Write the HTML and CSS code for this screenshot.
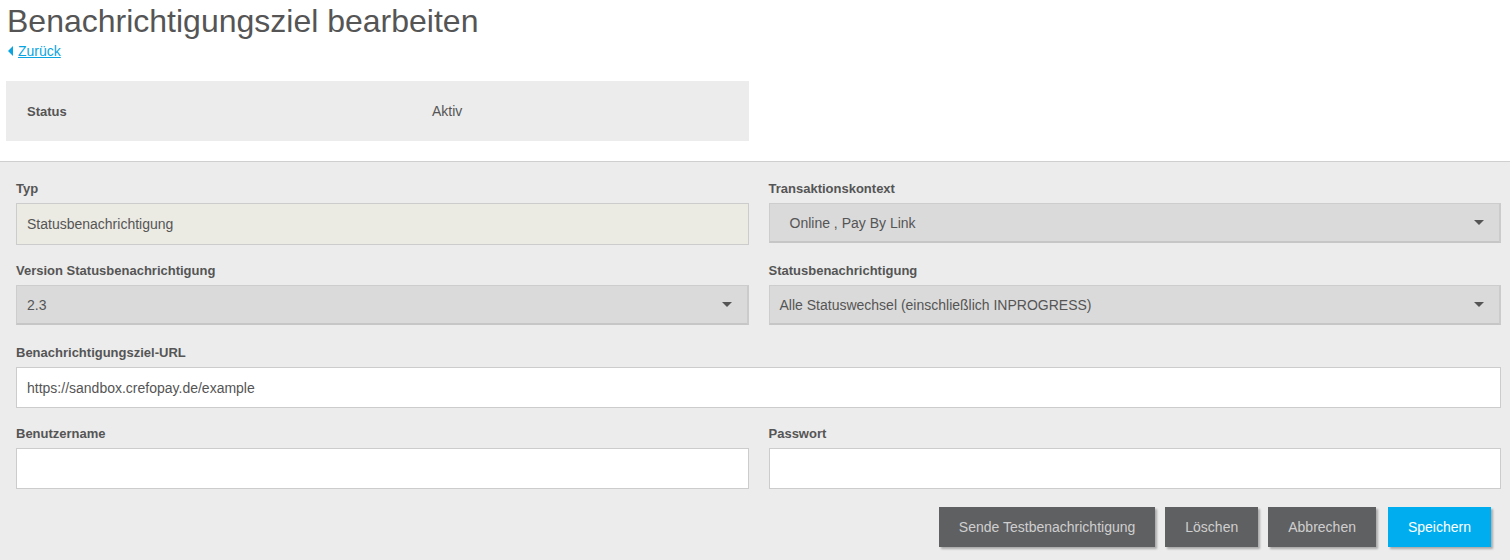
FILE: index.html
```html
<!DOCTYPE html>
<html lang="de">
<head>
<meta charset="utf-8">
<title>Benachrichtigungsziel bearbeiten</title>
<link rel="stylesheet" href="styles.css">
</head>
<body>
<header class="page-head">
  <h1 class="title">Benachrichtigungsziel bearbeiten</h1>
  <a class="back" href="#"><span class="caret"></span><span class="back-text">Zurück</span></a>
</header>
<section class="status-box">
  <div class="status-label">Status</div>
  <div class="status-value">Aktiv</div>
</section>
<form class="form">
  <div class="grid">
    <div class="group">
      <label class="label">Typ</label>
      <div class="field field-readonly">Statusbenachrichtigung</div>
    </div>
    <div class="group">
      <label class="label">Transaktionskontext</label>
      <div class="field field-select field-indent">Online , Pay By Link<span class="arrow"></span></div>
    </div>
    <div class="group">
      <label class="label">Version Statusbenachrichtigung</label>
      <div class="field field-select">2.3<span class="arrow"></span></div>
    </div>
    <div class="group">
      <label class="label">Statusbenachrichtigung</label>
      <div class="field field-select">Alle Statuswechsel (einschließlich INPROGRESS)<span class="arrow"></span></div>
    </div>
    <div class="group span-2">
      <label class="label">Benachrichtigungsziel-URL</label>
      <div class="field field-input">https://sandbox.crefopay.de/example</div>
    </div>
    <div class="group">
      <label class="label">Benutzername</label>
      <div class="field field-input"></div>
    </div>
    <div class="group">
      <label class="label">Passwort</label>
      <div class="field field-input"></div>
    </div>
  </div>
  <div class="actions">
    <button type="button" class="btn">Sende Testbenachrichtigung</button>
    <button type="button" class="btn">Löschen</button>
    <button type="button" class="btn">Abbrechen</button>
    <button type="button" class="btn btn-primary">Speichern</button>
  </div>
</form>
</body>
</html>
```
FILE: styles.css
```css
html, body {
  margin: 0;
  padding: 0;
  background: #ffffff;
  font-family: "Liberation Sans", Arial, sans-serif;
  color: #555555;
}
.page-head {
  padding: 2px 0 0 7px;
}
.title {
  margin: 0;
  font-size: 32px;
  font-weight: normal;
  line-height: 38px;
  color: #555555;
}
.back {
  display: inline-flex;
  align-items: center;
  margin-top: 3px;
  margin-left: 1px;
  color: #0aa5e0;
  font-size: 14px;
  line-height: 16px;
  text-decoration: none;
}
.caret {
  width: 0;
  height: 0;
  border-top: 5px solid transparent;
  border-bottom: 5px solid transparent;
  border-right: 5px solid #0aa5e0;
  margin-right: 5px;
}
.back-text {
  text-decoration: underline;
}
.status-box {
  margin: 21px 0 0 6px;
  width: 743px;
  height: 60px;
  background: #ececec;
  display: flex;
  align-items: center;
}
.status-label {
  width: 405px;
  padding-left: 21px;
  font-size: 13px;
  font-weight: bold;
  color: #555555;
}
.status-value {
  font-size: 14px;
  color: #555555;
}
.form {
  margin-top: 20px;
  border-top: 1px solid #cfcfcf;
  background: #ececec;
  padding: 19px 9px 20px 16px;
}
.grid {
  display: grid;
  grid-template-columns: 1fr 1fr;
  column-gap: 20px;
}
.span-2 {
  grid-column: 1 / span 2;
}
.group {
  display: flex;
  flex-direction: column;
  margin-bottom: 18px;
}
.label {
  font-size: 13px;
  font-weight: bold;
  line-height: 16px;
  color: #555555;
  margin-bottom: 6px;
}
.field {
  box-sizing: border-box;
  height: 42px;
  border: 1px solid #cccccc;
  padding: 0 10px;
  font-size: 14px;
  color: #555555;
  display: flex;
  align-items: center;
  position: relative;
}
.field-readonly {
  background: #ebeae3;
}
.field-input {
  background: #ffffff;
  height: 41px;
}
.field-select {
  background: #dadada;
  height: 40px;
  margin-bottom: 2px;
  border-color: #cdcdcd;
  border-bottom: 2px solid #c6c6c6;
  border-right: 2px solid #cbcbcb;
}
.field-indent {
  padding-left: 20px;
}
.arrow {
  position: absolute;
  right: 15px;
  top: 50%;
  margin-top: -3px;
  width: 0;
  height: 0;
  border-left: 5px solid transparent;
  border-right: 5px solid transparent;
  border-top: 5px solid #555555;
}
.actions {
  display: flex;
  justify-content: flex-end;
  gap: 10px;
  padding-right: 10px;
}
.btn {
  height: 40px;
  border: none;
  padding: 0 20px;
  background: #5f6062;
  color: #cfcfcf;
  font-family: "Liberation Sans", Arial, sans-serif;
  font-size: 14px;
  box-shadow: 2px 2px 2px rgba(0, 0, 0, 0.28);
  cursor: pointer;
}
.btn-primary {
  background: #00aeef;
  color: #ffffff;
  margin-left: 2px;
}
```
